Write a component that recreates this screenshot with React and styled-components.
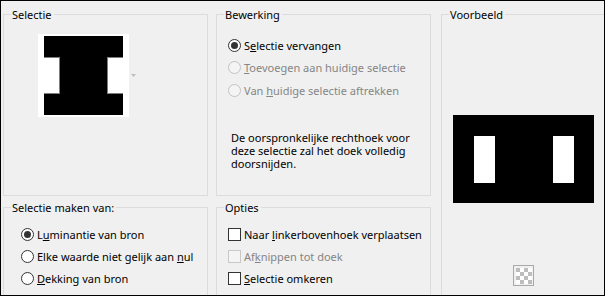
import React from 'react';
import styled, { createGlobalStyle } from 'styled-components';

const GlobalStyle = createGlobalStyle`
	body {
		margin: 0;
		background: #fff;
	}
`;

const Window = styled.div`
	width: 605px;
	height: 296px;
	box-sizing: border-box;
	border: 1px solid #000;
	background: #f0f0f0;
	overflow: hidden;
	padding: 13px 0 0 2px;
	display: grid;
	grid-template-columns: 205px 215px 170px;
	grid-template-rows: 182px 96px;
	column-gap: 8px;
	row-gap: 11px;
	font-family: 'Noto Sans', 'Open Sans', sans-serif;
	font-size: 11px;
	color: #000;
`;

const Group = styled.div`
	position: relative;
	box-sizing: border-box;
	border: 1px solid #dcdcdc;
	padding: ${({ $pad }) => $pad};
	grid-row: ${({ $span }) => ($span ? '1 / 3' : 'auto')};
	grid-column: ${({ $col }) => $col || 'auto'};
	margin-left: ${({ $shift }) => $shift || 0};
`;

const Legend = styled.span`
	position: absolute;
	top: -8px;
	left: 7px;
	padding: 0 2px 0 1px;
	background: #f0f0f0;
	line-height: 15px;
	white-space: nowrap;
`;

const ShapeRow = styled.div`
	display: flex;
	align-items: center;
	gap: 2px;
`;

const Option = styled.label`
	display: flex;
	align-items: center;
	gap: 3px;
	height: ${({ $h }) => $h || '22px'};
	line-height: 15px;
	white-space: nowrap;
	color: ${({ $disabled }) => ($disabled ? '#858585' : '#000')};

	u {
		text-underline-offset: 1px;
	}
`;

const Radio = styled.span`
	position: relative;
	flex: none;
	width: 13px;
	height: 13px;
	box-sizing: border-box;
	border-radius: 50%;
	border: 1px solid ${({ $disabled }) => ($disabled ? '#c2c2c2' : '#333')};
	background: ${({ $disabled }) => ($disabled ? '#f4f4f4' : '#fff')};

	&::after {
		content: '';
		display: ${({ $checked }) => ($checked ? 'block' : 'none')};
		position: absolute;
		left: 2px;
		top: 2px;
		width: 7px;
		height: 7px;
		border-radius: 50%;
		background: #333;
	}
`;

const Check = styled.span`
	flex: none;
	width: 13px;
	height: 13px;
	box-sizing: border-box;
	border: 1px solid ${({ $disabled }) => ($disabled ? '#c8c8c8' : '#333')};
	background: ${({ $disabled }) => ($disabled ? '#f4f4f4' : '#fff')};
`;

const Note = styled.p`
	margin: 29px 0 0 3px;
	line-height: 13px;
	white-space: nowrap;
`;

const PreviewStack = styled.div`
	width: 141px;
	display: flex;
	flex-direction: column;
	align-items: center;
	gap: 62px;
`;

const SourceShape = () => (
	<svg width="91" height="83" viewBox="0 0 91 83">
		<rect width="91" height="83" fill="#fff" />
		<path d="M6 2H85V23H69V60H85V81H6V60H22V23H6Z" fill="#000" />
		<g stroke="#7d7d7d" strokeWidth="1" fill="none">
			<path d="M6 23.5H22M21.5 23V60M6 59.5H22" />
			<path d="M69 23.5H85M69.5 23V60M69 59.5H85" />
		</g>
	</svg>
);

const DropArrow = () => (
	<svg width="5" height="3" viewBox="0 0 5 3">
		<path d="M0 0H5L2.5 3Z" fill="#bdbdbd" />
	</svg>
);

const PreviewShape = () => (
	<svg width="141" height="88" viewBox="0 0 141 88">
		<rect width="141" height="88" fill="#000" />
		<rect x="21" y="21" width="21" height="47" fill="#fff" />
		<rect x="100" y="21" width="21" height="47" fill="#fff" />
	</svg>
);

const Checker = () => {
	const cells = [];
	for (let r = 0; r < 4; r++) {
		for (let c = 0; c < 4; c++) {
			if ((r + c) % 2 === 0) {
				cells.push(<rect key={`${r}-${c}`} x={3 + c * 4} y={3 + r * 4} width="4" height="4" fill="#bdbdbd" />);
			}
		}
	}
	return (
		<svg width="21" height="21" viewBox="0 0 21 21">
			<rect x="0.5" y="0.5" width="20" height="20" fill="#f0f0f0" stroke="#a9a9a9" />
			<rect x="3" y="3" width="16" height="16" fill="#fff" />
			{cells}
		</svg>
	);
};

export default function App() {
	return (
		<>
			<GlobalStyle />
			<Window>
				<Group $pad="19px 0 0 34px">
					<Legend>Selectie</Legend>
					<ShapeRow>
						<SourceShape />
						<DropArrow />
					</ShapeRow>
				</Group>

				<Group $pad="19px 0 0 11px">
					<Legend>Bewerking</Legend>
					<Option $h="22.5px">
						<Radio $checked />
						<span>S<u>e</u>lectie vervangen</span>
					</Option>
					<Option $h="22.5px" $disabled>
						<Radio $disabled />
						<span><u>T</u>oevoegen aan huidige selectie</span>
					</Option>
					<Option $h="22.5px" $disabled>
						<Radio $disabled />
						<span>Van <u>h</u>uidige selectie aftrekken</span>
					</Option>
					<Note>
						De oorspronkelijke rechthoek voor
						<br />
						deze selectie zal het doek volledig
						<br />
						doorsnijden.
					</Note>
				</Group>

				<Group $span $col="3" $shift="2px" $pad="100px 0 0 11px">
					<Legend>Voorbeeld</Legend>
					<PreviewStack>
						<PreviewShape />
						<Checker />
					</PreviewStack>
				</Group>

				<Group $col="1" $pad="15px 0 0 17px">
					<Legend>Selectie maken van:</Legend>
					<Option>
						<Radio $checked />
						<span>L<u>u</u>minantie van bron</span>
					</Option>
					<Option>
						<Radio />
						<span>Elke waarde niet gelijk aan <u>n</u>ul</span>
					</Option>
					<Option>
						<Radio />
						<span><u>D</u>ekking van bron</span>
					</Option>
				</Group>

				<Group $col="2" $pad="15px 0 0 11px">
					<Legend>Opties</Legend>
					<Option>
						<Check />
						<span>Naar <u>l</u>inkerbovenhoek verplaatsen</span>
					</Option>
					<Option $disabled>
						<Check $disabled />
						<span>Af<u>k</u>nippen tot doek</span>
					</Option>
					<Option>
						<Check />
						<span><u>S</u>electie omkeren</span>
					</Option>
				</Group>
			</Window>
		</>
	);
}
